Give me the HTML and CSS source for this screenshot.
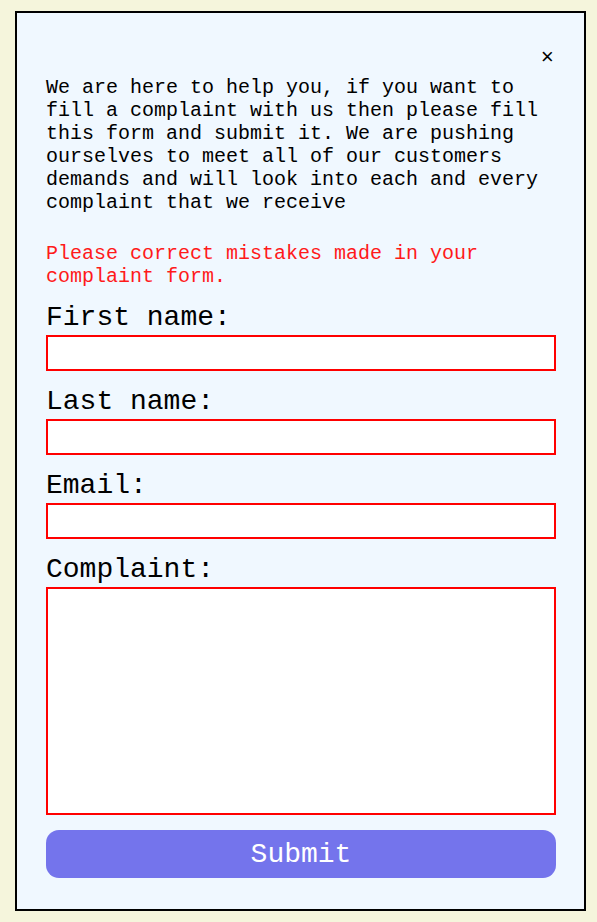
FILE: index.html
```html
<!DOCTYPE html>
<html>
<head>
<meta charset="utf-8">
<link rel="stylesheet" href="styles.css">
</head>
<body>
<div class="modal">
  <div class="close-row"><span class="close">&times;</span></div>
  <p class="intro">We are here to help you, if you want to fill a complaint with us then please fill this form and submit it. We are pushing ourselves to meet all of our customers demands and will look into each and every complaint that we receive</p>
  <p class="error">Please correct mistakes made in your complaint form.</p>
  <form class="form">
    <label class="label" for="fn">First name:</label>
    <input class="field" id="fn" type="text">
    <label class="label" for="ln">Last name:</label>
    <input class="field" id="ln" type="text">
    <label class="label" for="em">Email:</label>
    <input class="field" id="em" type="text">
    <label class="label" for="cp">Complaint:</label>
    <textarea class="field area" id="cp"></textarea>
    <button class="submit" type="button">Submit</button>
  </form>
</div>
</body>
</html>
```
FILE: styles.css
```css
html, body {
  background: #f5f5dc;
}
body {
  margin: 0;
  padding: 11px 11px 11px 15px;
  font-family: "Liberation Mono", "Courier New", monospace;
}
.modal {
  background: #f0f8ff;
  border: 2px solid #000;
  box-sizing: border-box;
  width: 571px;
  padding: 34px 28px 31px 29px;
  display: flex;
  flex-direction: column;
}
.close-row {
  display: flex;
  justify-content: flex-end;
  padding-right: 2px;
  height: 24px;
}
.close {
  font-size: 22px;
  line-height: 24px;
  color: #000;
}
.intro {
  margin: 5px 0 0;
  font-size: 20px;
  line-height: 23px;
  color: #000;
}
.error {
  margin: 28px 0 0;
  font-size: 20px;
  line-height: 23px;
  color: #ff1a1a;
}
.form {
  display: flex;
  flex-direction: column;
  margin-top: 14px;
}
.label {
  font-size: 28px;
  line-height: 32px;
  margin-top: 15px;
  margin-bottom: 1px;
  color: #000;
}
.label:first-child {
  margin-top: 0;
}
.field {
  display: block;
  box-sizing: border-box;
  width: 510px;
  height: 36px;
  border: 2px solid #ff0000;
  background: #fff;
  margin: 0;
  padding: 2px;
  font-family: inherit;
  font-size: 20px;
}
.area {
  height: 228px;
  resize: none;
}
.submit {
  margin-top: 15px;
  width: 510px;
  height: 48px;
  border: none;
  border-radius: 13px;
  background: #7474ec;
  color: #fff;
  font-family: inherit;
  font-size: 28px;
  padding: 0;
}
```
